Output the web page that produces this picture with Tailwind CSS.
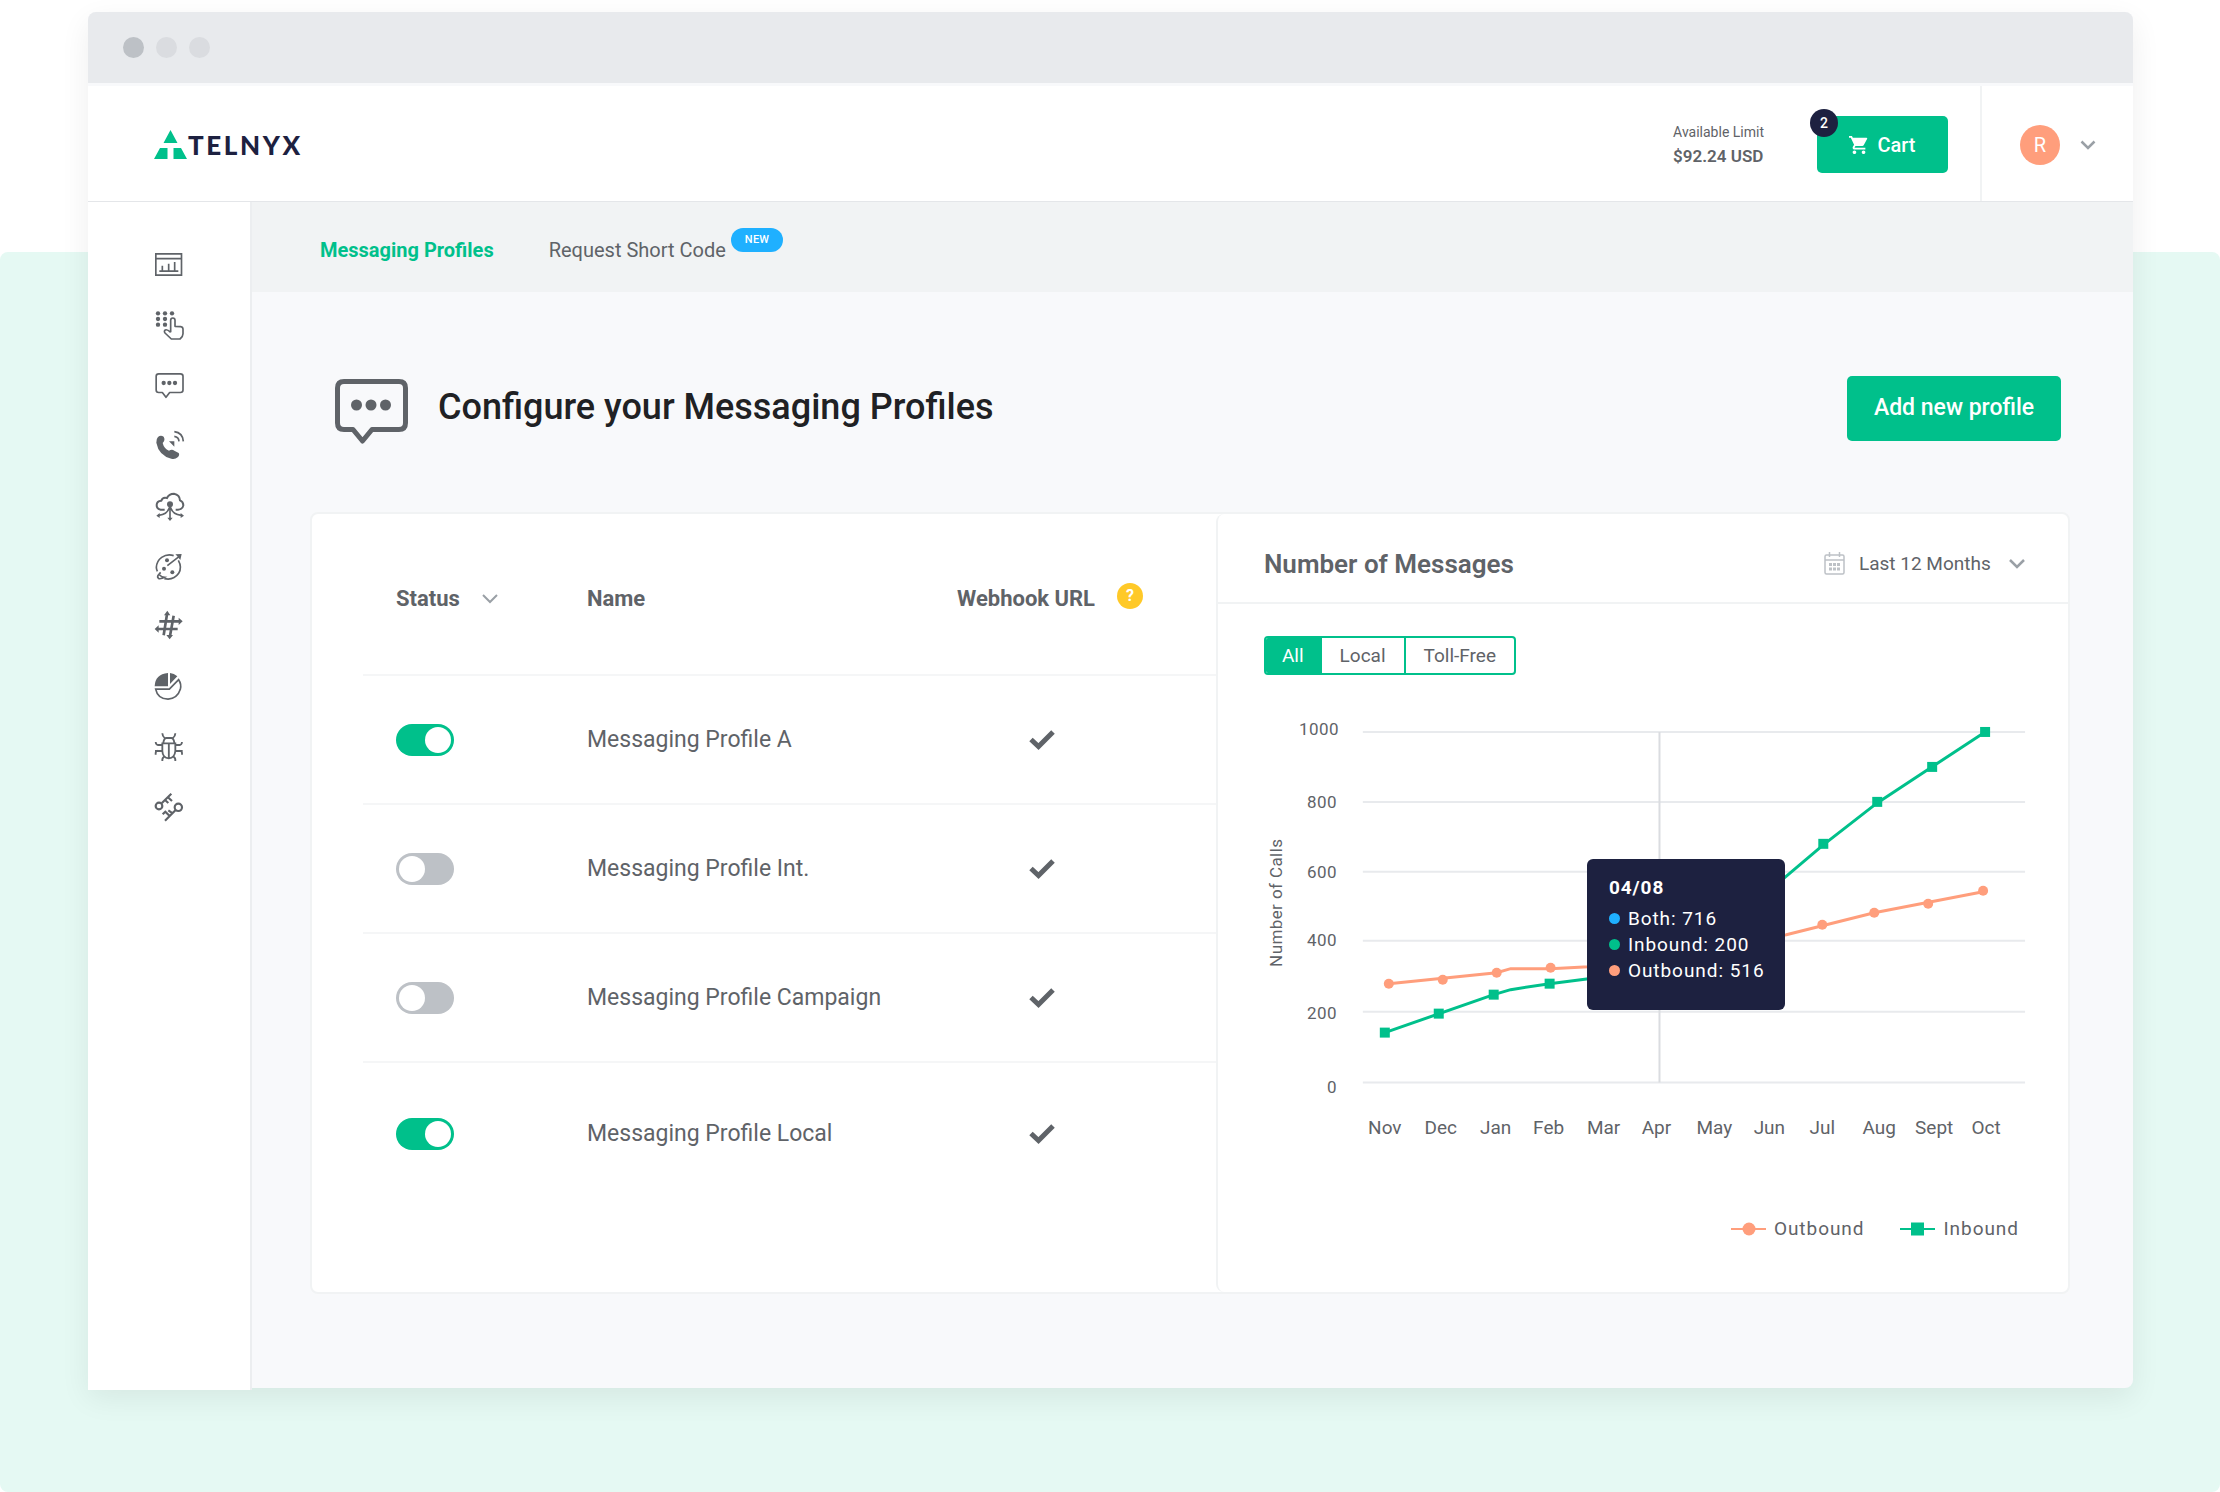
<!DOCTYPE html>
<html lang="en">
<head>
<meta charset="utf-8">
<meta name="viewport" content="width=device-width, initial-scale=1">
<title>Telnyx – Messaging Profiles</title>
<script src="https://cdn.jsdelivr.net/npm/@tailwindcss/browser@4"></script>
</head>
<body class="bg-white font-[Roboto,sans-serif] text-[#5f6368]">
<div class="relative isolate min-h-screen pt-3 pr-[87px] pb-[104px] pl-[88px]">
  <div class="absolute inset-x-0 top-[252px] bottom-0 -z-10 rounded-lg bg-[#e5f9f3]"></div>

  <div class="rounded-t-lg rounded-br-lg bg-[#f8f9fb] shadow-[0_10px_30px_rgba(0,0,0,0.07)]">
    <!-- Window bar -->
    <div class="flex h-[71px] items-center gap-3 rounded-t-lg bg-[#e8eaed] pl-[35px]">
      <span class="size-[21px] rounded-full bg-[#bdc1c6]"></span>
      <span class="size-[21px] rounded-full bg-[#dadce0]"></span>
      <span class="size-[21px] rounded-full bg-[#dadce0]"></span>
    </div>

    <!-- Header -->
    <header class="flex h-[119px] items-stretch border-t-3 border-b border-t-[#f8f9fb] border-b-[#e4e6e9] bg-white">
      <a href="#" class="flex items-center pt-[2px] pl-[66px]" aria-label="Telnyx home">
        <svg class="h-[30px] w-[33px]" viewBox="0 0 33 30" fill="#00c08b"><path d="M16.500 0L23.500 13H9.500ZM6 18H13.500V29H0ZM19.500 18H27L33 29H19.500Z"/></svg>
        <span class="pl-px font-[Lato,sans-serif] text-[26px] leading-8 font-black tracking-widest text-[#1d2140]">TELNYX</span>
      </a>
      <div class="ml-auto flex items-center">
        <div class="mr-[53px]">
          <p class="text-[14px] leading-6">Available Limit</p>
          <p class="text-[17px] leading-6 font-semibold">$92.24 USD</p>
        </div>
        <button class="relative mt-[2px] mr-8 flex h-[57px] w-[131px] items-center justify-center gap-2 rounded-[5px] bg-[#00c08b] text-[20px] font-medium text-white">
          <span class="absolute -top-[7px] -left-[7px] flex size-7 items-center justify-center rounded-full bg-[#1d2140] text-[14px] font-medium">2</span>
          <svg class="size-5" viewBox="1 1 22 22" fill="currentColor"><path d="M7 18c-1.100 0-1.990.9-1.990 2S5.900 22 7 22s2-.9 2-2-.9-2-2-2zM1 2v2h2l3.600 7.590-1.350 2.450c-.16.280-.25.610-.25.960 0 1.100.9 2 2 2h12v-2H7.420c-.14 0-.25-.11-.25-.25l.03-.12.900-1.630h7.450c.75 0 1.410-.41 1.750-1.030l3.580-6.490A1 1 0 0020 4H5.210l-.94-2H1zm16 16c-1.100 0-1.990.9-1.990 2s.89 2 1.990 2 2-.9 2-2-.9-2-2-2z"/></svg>
          Cart
        </button>
        <button class="flex h-full w-[153px] items-center gap-5 border-l-2 border-[#f1f3f4] pt-[2px] pl-[38px]" aria-label="Account menu">
          <span class="flex size-10 items-center justify-center rounded-full bg-[#ff9e7c] text-[20px] text-white">R</span>
          <svg class="h-[10px] w-4" viewBox="0 0 16 10" fill="none" stroke="#9aa0a6" stroke-width="2.500"><path d="M1.500 1.500L8 8l6.500-6.500"/></svg>
        </button>
      </div>
    </header>

    <div class="flex">
      <!-- Sidebar -->
      <nav class="-mb-[2px] flex w-[164px] shrink-0 flex-col items-center gap-7 border-r-2 border-[#eceef0] bg-white pt-[47px]" aria-label="Main">
        <a href="#" aria-label="Dashboard"><svg class="block size-8 overflow-visible" viewBox="69 57 96 96" fill="none" stroke="#5f6368" stroke-width="5"><path d="M77.500 71.500H154.500V135.500H77.500ZM77.500 86H154.500M88 123.500H145M97 107V123M116 101V123M134 96V123"/></svg></a>
        <a href="#" aria-label="Numbers"><svg class="block size-8 overflow-visible" viewBox="69 237 96 96" fill="none" stroke="#5f6368" stroke-width="5" stroke-linejoin="round"><g fill="#5f6368" stroke="none"><circle cx="84" cy="250" r="6.500"/><circle cx="105" cy="250" r="6.500"/><circle cx="126" cy="250" r="6.500"/><circle cx="84" cy="267" r="6.500"/><circle cx="105" cy="267" r="6.500"/><circle cx="84" cy="284" r="6.500"/><circle cx="105" cy="284" r="6.500"/></g><path d="M122 307V271Q122 264 128.500 264Q135 264 135 271V289L152 290Q159 291 159 298V311Q159 320 150 327H124L105 309Q101 303 106 300Q111 297 122 307"/></svg></a>
        <a href="#" aria-label="Messaging"><svg class="block size-8 overflow-visible" viewBox="69 417 96 96" fill="none" stroke="#5f6368" stroke-width="5" stroke-linejoin="round"><path d="M86 431.500H151Q159 431.500 159 439V480Q159 487.500 151 487.500H119L108 502L97 487.500H86Q78.500 487.500 78.500 480V439Q78.500 431.500 86 431.500Z"/><g fill="#5f6368" stroke="none"><circle cx="101" cy="459" r="6.500"/><circle cx="118" cy="459" r="6.500"/><circle cx="135" cy="459" r="6.500"/></g></svg></a>
        <a href="#" aria-label="Voice"><svg class="block size-8 overflow-visible" viewBox="69 597 96 96" fill="none" stroke="#5f6368" stroke-width="5"><path fill="#5f6368" stroke="none" d="M84 621Q92 614 101 620Q107 630 98 639Q102 656 117 662Q126 656 133 662L146 669Q150 675 143 682Q135 689 124 686Q86 676 79 638Q78 627 84 621ZM117 634H133V650Z"/><path d="M133 619Q146 621 147 634M133 605Q158 608 160 634"/></svg></a>
        <a href="#" aria-label="SIP trunking"><svg class="block size-8 overflow-visible" viewBox="69 777 96 96" fill="none" stroke="#5f6368" stroke-width="6"><path d="M104 839H92Q80 837 80 825Q80 813 94 812Q98 800 111 804Q117 791 132 791Q149 794 150 811Q160 815 160 826Q158 838 144 839H137"/><path stroke-width="5" d="M120 823V866M118 832Q113 853 86 856M122 832Q127 853 154 856"/><path fill="#5f6368" stroke="none" d="M79 857L89 849V864ZM162 857L152 849V864ZM120 873L112 863H128ZM120 814a9 9 0 110 18a9 9 0 110-18Z"/></svg></a>
        <a href="#" aria-label="Outbound profiles"><svg class="block size-8 overflow-visible" viewBox="69 57 96 96" fill="none" stroke="#5f6368" stroke-width="5"><path d="M131 77Q112 71 95 82Q80 93 79 112Q79 118 82 124M145 91Q157 112 146 130Q131 152 103 146M112 107L148 79"/><path d="M92 127L84 136Q81 143 87 146Q95 147 104 142Q94 141 89 135"/><path fill="#5f6368" stroke="none" d="M136 73L155 72L151 90L146 84L142 79Z"/><g fill="#5f6368" stroke="none"><circle cx="111" cy="91" r="6"/><circle cx="102" cy="116" r="6"/><circle cx="127" cy="127" r="6"/></g></svg></a>
        <a href="#" aria-label="Number lookup"><svg class="block size-8 overflow-visible" viewBox="69 237 96 96" fill="none" stroke="#5f6368" stroke-width="8"><path d="M88 274H148M84 297H143M111 253L101 316M131 257L120 318"/><path fill="#5f6368" stroke="none" d="M158 274L146 263V285ZM74 297L86 286V308ZM112 242L102 256H121ZM119 328L109 315H129Z"/></svg></a>
        <a href="#" aria-label="Reports"><svg class="block size-8 overflow-visible" viewBox="69 417 96 96" fill="none" stroke="#5f6368" stroke-width="5"><path fill="#5f6368" stroke="none" d="M114 429V469H74Q75 433 114 429ZM120 429Q132 430 142 439L120 462Z"/><path d="M77 477.500H118L146 449Q155 462 151 478Q142 506 114 507.500Q83 507 77 477.500Z"/></svg></a>
        <a href="#" aria-label="Debugging"><svg class="block size-8 overflow-visible" viewBox="69 597 96 96" fill="none" stroke="#5f6368" stroke-width="5.500"><path d="M97 640H136V663Q134 684 116.500 685Q98 684 97 663ZM116.500 640V685M100 638Q102 625 109 624H124Q131 625 133 638M97 610Q97 619 105 625M136 610Q136 619 128 625M77 636Q78 645 84 645H96M156 636Q155 645 149 645H137M75 663H96M158 663H137M77 674V668Q78 663 84 662M156 674V668Q155 663 149 662M97 693Q96 684 102 680M136 693Q137 684 131 680"/></svg></a>
        <a href="#" aria-label="API keys"><svg class="block size-8 overflow-visible" viewBox="69 777 96 96" fill="none" stroke="#5f6368" stroke-width="6.500"><circle cx="87" cy="828" r="10"/><circle cx="145" cy="832" r="11"/><path d="M95 820L124 791M113 801L126 813M105 810L115 819M137 840L105 872M119 858L106 845L98 853M128 850L115 841"/></svg></a>
      </nav>

      <div class="min-w-0 flex-1">
        <!-- Tabs -->
        <nav class="flex h-[90px] items-center gap-[55px] bg-[#f1f3f4] pl-[68px] text-[20px] leading-6" aria-label="Messaging">
          <a href="#" class="pt-[6px] font-bold text-[#00c08b]" aria-current="page">Messaging Profiles</a>
          <a href="#" class="flex items-center gap-[5px]"><span class="pt-[6px]">Request Short Code</span><span class="mb-[14px] rounded-full bg-[#1fb0ff] px-[14px] text-[11px] leading-6 font-medium tracking-wide text-white">NEW</span></a>
        </nav>

        <main class="pr-[63px] pb-[94px] pl-[58px]">
          <div class="flex h-[220px] items-center pt-3 pr-[9px] pl-[25px]">
            <svg class="mt-[6px] h-[66px] w-[74px]" viewBox="0 0 74 66" fill="none" stroke="#5f6368" stroke-width="5" stroke-linejoin="round"><path d="M9 3.500H64Q70.500 3.500 70.500 10V45Q70.500 51.500 64 51.500H37L27.500 63L18 51.500H9Q2.500 51.500 2.500 45V10Q2.500 3.500 9 3.500Z"/><g fill="#5f6368" stroke="none"><circle cx="21.500" cy="27" r="5.500"/><circle cx="36" cy="27" r="5.500"/><circle cx="50.500" cy="27" r="5.500"/></g></svg>
            <h1 class="pb-[2px] pl-[29px] text-[36px] leading-10 font-medium text-[#202124]">Configure your Messaging Profiles</h1>
            <button class="ml-auto h-[65px] w-[214px] rounded-[5px] bg-[#00c08b] text-[23px] font-medium text-white">Add new profile</button>
          </div>

          <div class="grid grid-cols-[905fr_853fr] rounded-lg border-2 border-[#f1f3f4] bg-white">
            <!-- Profiles -->
            <section class="min-w-0 pl-[51px]" aria-label="Messaging profiles">
              <table class="w-full table-fixed text-left text-[23px] leading-7">
                <colgroup><col class="w-[224px]"><col><col class="w-[259px]"></colgroup>
                <thead class="text-[22px]">
                  <tr class="h-[161px] border-b-2 border-[#f5f6f7]">
                    <th class="pt-[10px] pl-[33px] font-bold"><button class="flex items-center gap-[22px]">Status <svg class="h-[10px] w-4" viewBox="0 0 16 10" fill="none" stroke="#9aa0a6" stroke-width="2"><path d="M1 1l7 7 7-7"/></svg></button></th>
                    <th class="pt-[10px] font-bold">Name</th>
                    <th class="pt-[10px] font-bold"><span class="flex items-center gap-[22px]">Webhook URL <button class="mb-[6px] size-[26px] rounded-full bg-[#ffc928] text-[16px] leading-none font-bold text-white" aria-label="About webhook URLs">?</button></span></th>
                  </tr>
                </thead>
                <tbody id="profiles"></tbody>
              </table>
            </section>

            <!-- Messages chart -->
            <section class="min-w-0 rounded-lg border-l-2 border-[#f1f3f4]" aria-labelledby="chart-title">
              <div class="flex h-[90px] items-center justify-between border-b-2 border-[#f1f3f4] pt-[11px] pr-[43px] pl-[46px]">
                <h2 id="chart-title" class="text-[26px] leading-8 font-semibold">Number of Messages</h2>
                <label class="flex items-center gap-[14px]">
                  <svg class="h-[23px] w-[21px]" viewBox="0 0 21 23" fill="none" stroke="#bdc1c6" stroke-width="1.500"><path d="M2.500 3H18.500Q20 3 20 4.500V20.500Q20 22 18.500 22H2.500Q1 22 1 20.500V4.500Q1 3 2.500 3ZM1 8H20M5.500 0V5M15.500 0V5"/><path stroke-width="3" stroke-dasharray="3 1" d="M5 12.500H16M5 17H16"/></svg>
                  <span class="relative flex items-center">
                    <select class="appearance-none bg-transparent pr-[34px] text-[19px] leading-6" aria-label="Period"><option>Last 12 Months</option></select>
                    <svg class="pointer-events-none absolute right-0 h-[10px] w-4" viewBox="0 0 16 10" fill="none" stroke="#9aa0a6" stroke-width="2.500"><path d="M1 1l7 7 7-7"/></svg>
                  </span>
                </label>
              </div>
              <div class="px-[46px] pt-8">
                <div class="inline-flex h-[39px] divide-x-2 divide-[#00c08b] overflow-hidden rounded-[4px] border-2 border-[#00c08b] text-[19px] leading-6" role="group" aria-label="Number type">
                  <button class="bg-[#00c08b] px-4 text-white" aria-pressed="true">All</button>
                  <button class="px-[18px]" aria-pressed="false">Local</button>
                  <button class="px-[18px]" aria-pressed="false">Toll-Free</button>
                </div>
              </div>
              <div class="relative mt-[25px]">
                <svg id="chart" class="block w-full" viewBox="0 0 851 450" role="img" aria-label="Inbound and outbound messages per month"></svg>
                <div class="absolute top-[35.300%] left-[43.400%] h-[151px] w-[198px] rounded-[6px] bg-[#1d2140] pt-4 pl-[22px] text-[19px] leading-[26px] tracking-wider whitespace-nowrap text-white">
                  <p class="mb-[5px] font-bold">04/08</p>
                  <p class="flex items-center gap-2"><span class="size-[11px] rounded-full bg-[#1fb0ff]"></span>Both: 716</p>
                  <p class="flex items-center gap-2"><span class="size-[11px] rounded-full bg-[#00c08b]"></span>Inbound: 200</p>
                  <p class="flex items-center gap-2"><span class="size-[11px] rounded-full bg-[#ff9e7c]"></span>Outbound: 516</p>
                </div>
              </div>
              <div class="mt-[66px] mb-[49px] flex justify-end gap-9 pr-[49px] text-[19px] leading-7 tracking-wider">
                <span class="flex items-center gap-2"><svg class="h-[14px] w-[35px]" viewBox="0 0 35 14" fill="#ff9e7c"><path d="M0 6H35V8H0Z"/><circle cx="18" cy="7" r="6.500"/></svg>Outbound</span>
                <span class="flex items-center gap-2"><svg class="h-[14px] w-[35px]" viewBox="0 0 35 14" fill="#00c08b"><path d="M0 6H35V8H0ZM11 .500H24V13.500H11Z"/></svg>Inbound</span>
              </div>
            </section>
          </div>
        </main>
      </div>
    </div>
  </div>
</div>

<script>
  const profiles = [['A', true], ['Int.', false], ['Campaign', false], ['Local', true]];
  document.getElementById('profiles').innerHTML = profiles.map(([name, on]) => `
    <tr class="h-[129px] border-b-2 border-[#f5f6f7] last:h-[142px] last:border-b-0">
      <td class="pl-[33px]"><label class="relative block h-8 w-[58px]">
        <input type="checkbox" role="switch" aria-label="Messaging Profile ${name} enabled" ${on ? 'checked' : ''} class="peer block h-8 w-[58px] appearance-none rounded-full bg-[#bdc1c6] checked:bg-[#00c08b]">
        <span class="pointer-events-none absolute top-[3px] left-[3px] size-[26px] rounded-full bg-white peer-checked:left-[29px]"></span>
      </label></td>
      <td>Messaging Profile ${name}</td>
      <td class="pl-[72px]"><svg class="h-5 w-[26px]" viewBox="0 0 26 20" fill="none" stroke="#5f6368" stroke-width="5" role="img" aria-label="Configured"><path d="M2 9.500L9.500 16.500L24 2"/></svg></td>
    </tr>`).join('');

  const text = (x, y, label, extra) => `<text x="${x}" y="${y}" fill="#5f6368" ${extra}>${label}</text>`;
  const grid = [[32, 1000, 29], [102, 800, 102], [172, 600, 172], [241, 400, 240], [312, 200, 313], [383, 0, 387]];
  const months = [['Nov', 167], ['Dec', 223], ['Jan', 278], ['Feb', 331], ['Mar', 386], ['Apr', 439], ['May', 497], ['Jun', 552], ['Jul', 605], ['Aug', 662], ['Sept', 717], ['Oct', 769]];
  const outbound = [[171, 284], [225, 280], [279, 273], [333, 268], [605, 225], [657, 213], [711, 204], [766, 191]];
  const inbound = [[167, 333], [221, 314], [276, 295], [332, 284], [606, 144], [660, 102], [715, 67], [768, 32]];
  document.getElementById('chart').innerHTML =
    grid.map(([y]) => `<path d="M145 ${y}H808" stroke="#e8eaed" stroke-width="2"/>`).join('') +
    '<path d="M442 32V383" stroke="#dadce0" stroke-width="2"/>' +
    grid.map(([, v, y]) => text(v === 1000 ? 121 : 119, y + 6, v, 'text-anchor="end" class="text-[17px] tracking-wide"')).join('') +
    text(0, 0, 'Number of Calls', 'text-anchor="middle" transform="translate(64 203) rotate(-90)" class="text-[17px] tracking-wide"') +
    months.map(([m, x]) => text(x, 435, m, 'text-anchor="middle" class="text-[19px]"')).join('') +
    '<path d="M171 284L279 273L293 269H333L371 267L569 235L605 226L657 213L766 192" fill="none" stroke="#ff9e7c" stroke-width="3"/>' +
    '<path d="M167 333L276 295L293 290L332 284L371 279L451 270L567 178L606 145L660 103L768 32" fill="none" stroke="#00c08b" stroke-width="3"/>' +
    outbound.map(([x, y]) => `<circle cx="${x}" cy="${y}" r="5" fill="#ff9e7c"/>`).join('') +
    inbound.map(([x, y]) => `<rect x="${x - 5}" y="${y - 5}" width="10" height="10" fill="#00c08b"/>`).join('');
</script>
</body>
</html>
